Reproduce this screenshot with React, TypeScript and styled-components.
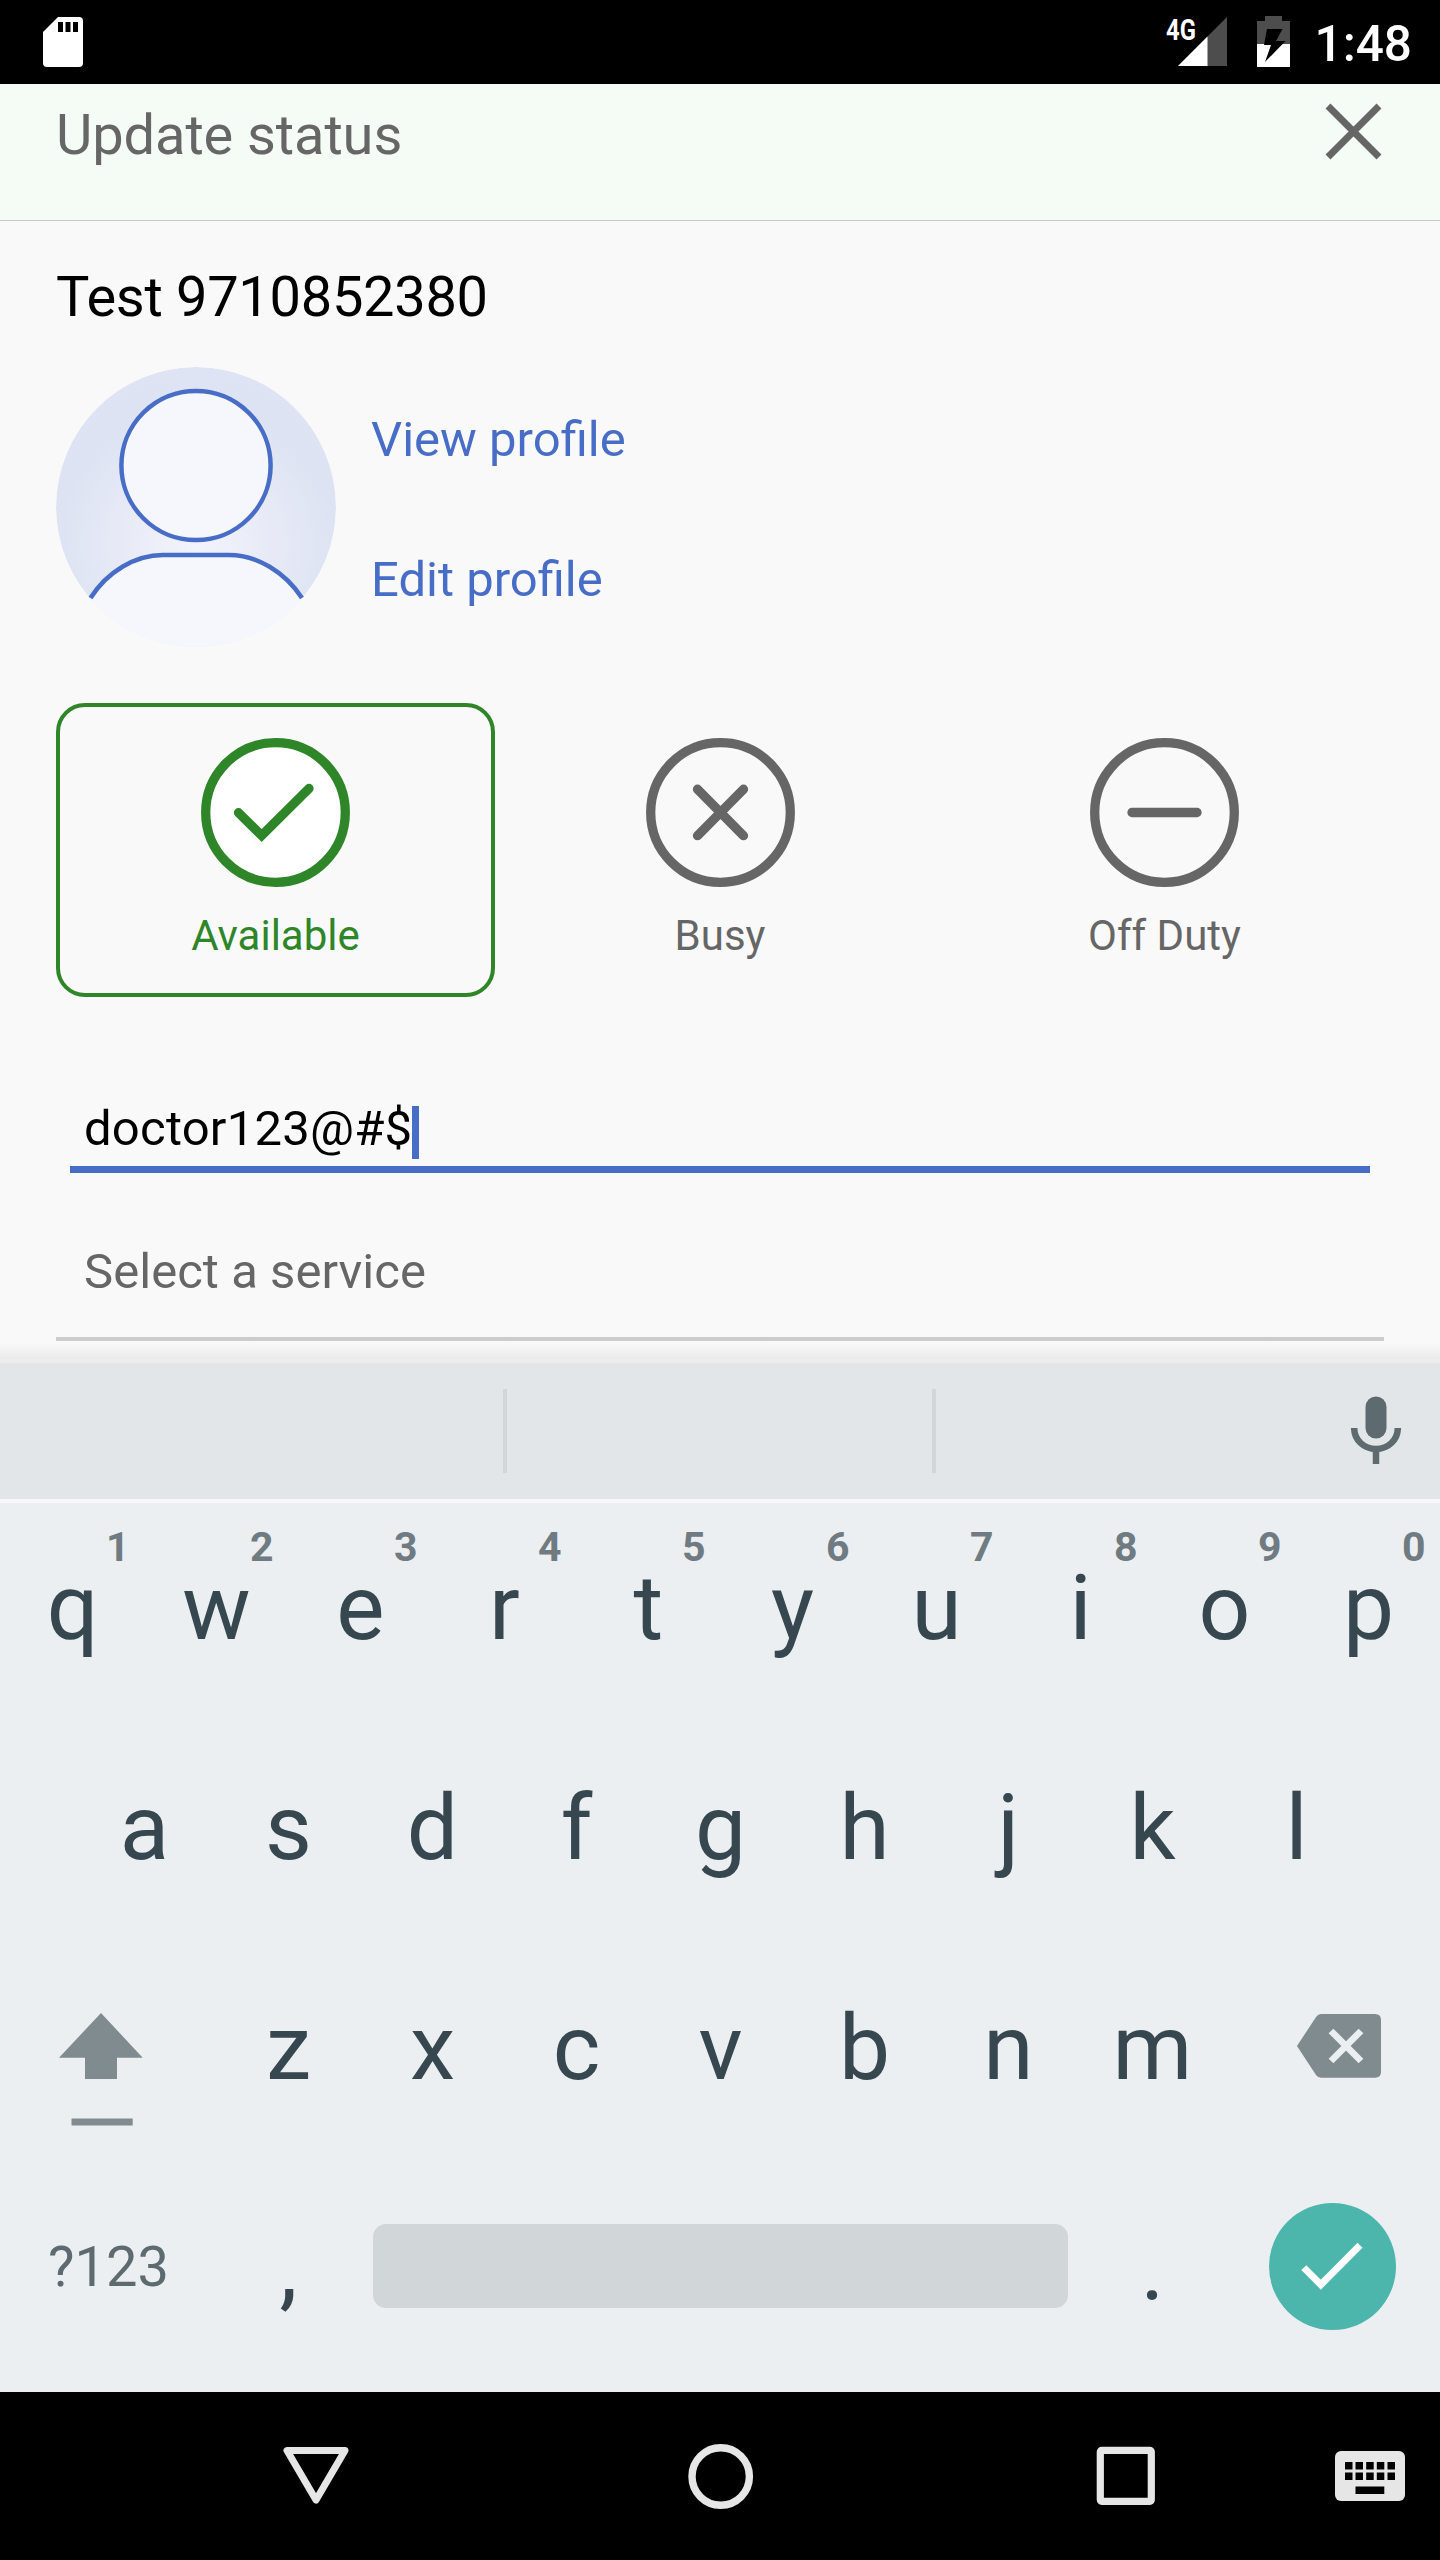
import React from "react";
import styled, { createGlobalStyle } from "styled-components";

const GlobalStyle = createGlobalStyle`
  *, *::before, *::after { box-sizing: border-box; }
  body { margin: 0; background: #f9f9f9; font-family: Roboto, "Noto Sans", sans-serif; }
  svg { display: block; flex: none; }
  button { border: 0; padding: 0; margin: 0; background: none; font: inherit; color: inherit; }
`;

const Screen = styled.div`
  width: 1440px;
  height: 2560px;
  display: flex;
  flex-direction: column;
  overflow: hidden;
  background: #f9f9f9;
`;

const StatusBar = styled.header`
  height: 84px;
  flex: none;
  display: flex;
  justify-content: space-between;
  background: #000;
  color: #fff;
  padding: 0 28px 0 43px;
`;

const StatusGroup = styled.div`
  display: flex;
  align-items: flex-start;
  padding-top: 16px;
`;

const NetworkType = styled.span`
  width: 30px;
  margin-right: -18px;
  padding-top: 2px;
  font-size: 29px;
  line-height: 25px;
  font-weight: 700;
  transform: scaleX(0.82);
  transform-origin: left;
  white-space: nowrap;
`;

const BatteryIcon = styled.svg`
  margin: 0 25px 0 30px;
`;

const Clock = styled.time`
  font-size: 49.5px;
  line-height: 56px;
  font-weight: 500;
`;

const TitleBar = styled.div`
  height: 137px;
  flex: none;
  display: flex;
  justify-content: space-between;
  align-items: flex-start;
  padding: 18px 55px 0 56px;
  background: #f5fcf5;
  border-bottom: 1px solid #c6cac6;
`;

const Title = styled.h1`
  margin: 0;
  font-size: 56px;
  line-height: 66px;
  font-weight: 400;
  letter-spacing: -0.1px;
  color: #666;
`;

const CloseButton = styled.button`
  margin-top: 0;
`;

const Content = styled.main`
  height: 1138px;
  flex: none;
  display: flex;
  flex-direction: column;
  padding: 43px 56px 0;
  background: linear-gradient(#f9f9f9 1122px, #eaeaea 1138px);
`;

const Name = styled.h2`
  margin: 0;
  font-size: 56px;
  line-height: 66px;
  font-weight: 400;
  letter-spacing: -0.3px;
  color: #000;
`;

const Profile = styled.section`
  display: flex;
  margin-top: 37px;
  gap: 35px;
`;

const ProfileLinks = styled.nav`
  display: flex;
  flex-direction: column;
  gap: 82px;
  padding-top: 44px;
`;

const ProfileLink = styled.a`
  font-size: 49px;
  line-height: 58px;
  color: #476dc7;
`;

const StatusGrid = styled.section`
  display: grid;
  grid-template-columns: repeat(3, 1fr);
  column-gap: 5.5px;
  margin-top: 56px;
`;

const StatusOption = styled.button<{ $active?: boolean }>`
  height: 294px;
  display: flex;
  flex-direction: column;
  align-items: center;
  gap: 24px;
  padding-top: 31px;
  border: 4px solid ${(p) => (p.$active ? "#2e8629" : "transparent")};
  border-radius: 29px;
  color: ${(p) => (p.$active ? "#2e8629" : "#666")};
  font-size: 42px;
  line-height: 50px;
`;

const StatusInput = styled.div`
  height: 91px;
  margin: 85px 14px 0;
  padding: 18px 14px 0;
  display: flex;
  align-items: flex-start;
  border-bottom: 7px solid #476dc7;
  font-size: 49px;
  line-height: 58px;
  letter-spacing: 0.22px;
  color: #000;
`;

const Caret = styled.span`
  width: 7px;
  height: 53px;
  margin-top: 6px;
  background: #476dc7;
`;

const ServiceSelect = styled.div`
  height: 168px;
  padding: 70px 28px 0;
  border-bottom: 4px solid #ccc;
  font-size: 49px;
  line-height: 58px;
  letter-spacing: 0.05px;
  color: #666;
`;

const Keyboard = styled.section`
  height: 1033px;
  flex: none;
  display: flex;
  flex-direction: column;
  background: #ebeff2;
  color: #37474f;
`;

const Suggestions = styled.div`
  height: 144px;
  flex: none;
  display: grid;
  grid-template-columns: 507px 429px 1fr;
  align-items: center;
  background: #e2e6e9;
  border-top: 4px solid #ebedee;
  border-bottom: 4px solid #f5f7f9;
`;

const Suggestion = styled.div<{ $last?: boolean }>`
  height: 84px;
  display: flex;
  align-items: center;
  justify-content: flex-end;
  border-right: ${(p) => (p.$last ? "0" : "4px solid #d1d6d8")};
  padding-right: ${(p) => (p.$last ? "39px" : "0")};
  padding-bottom: 2px;
`;

const KeyRow = styled.div`
  height: 220px;
  flex: none;
  display: flex;
  justify-content: center;
`;

const Key = styled.button<{ $width?: number }>`
  position: relative;
  width: ${(p) => p.$width ?? 144}px;
  height: 220px;
  padding: 52px 0 0 1px;
  display: flex;
  justify-content: center;
  align-items: flex-start;
  font-size: 91px;
  line-height: 106px;
`;

const Hint = styled.span`
  position: absolute;
  top: 20px;
  left: 106px;
  font-size: 41px;
  line-height: 48px;
  font-weight: 700;
  color: #6f7b80;
`;

const SymbolsKey = styled(Key)`
  padding-top: 71px;
  font-size: 56px;
  line-height: 66px;
  color: #5d6b70;
`;

const IconKey = styled(Key)<{ $top: number; $align: "start" | "end" }>`
  padding: ${(p) => p.$top}px 59px 0;
  justify-content: flex-${(p) => p.$align};
`;

const SpaceBar = styled.button`
  width: 695px;
  height: 84px;
  margin: 61px 12px 0 13px;
  border-radius: 13px;
  background: #d1d6d9;
`;

const EnterKey = styled.button`
  width: 127px;
  height: 127px;
  margin: 40px 44px 0 45px;
  border-radius: 50%;
  background: #4db6ac;
`;

const NavBar = styled.nav`
  height: 168px;
  flex: none;
  display: grid;
  grid-template-columns: 113px 405px 405px 405px 1fr;
  background: #000;
`;

const NavButton = styled.button<{ $column: number }>`
  grid-column: ${(p) => p.$column};
  display: flex;
  align-items: center;
  justify-content: center;
`;

const SwitcherButton = styled(NavButton)`
  justify-content: flex-start;
  padding-left: 7px;
`;

const SdCard = () => (
  <svg width="40" height="51" viewBox="43 16 40 51">
    <path d="M58 17H79Q83 17 83 21V63Q83 67 79 67H47Q43 67 43 63V32Z" fill="#fff" />
    <path d="M58 22h5v10h-5zM65.500 22h5v10h-5zM73 22h5v10h-5z" fill="#000" />
  </svg>
);

const Signal = () => (
  <svg width="49" height="50" viewBox="1178 16 49 50">
    <path d="M1227 17V66H1178Z" fill="#4d4d4d" />
    <path d="M1207.500 36.500V66H1178Z" fill="#fff" />
  </svg>
);

const Battery = () => (
  <BatteryIcon width="33" height="51" viewBox="1257 16 33 51">
    <path d="M1265 16h17v5h8v23h-33v-23h8z" fill="#4d4d4d" />
    <path d="M1257 44h33v23h-33z" fill="#fff" />
    <path d="M1267 29h15.500l-6.500 12h9.500l-20.500 21 6-17h-7z" fill="#000" />
  </BatteryIcon>
);

const Avatar = () => (
  <svg width="280" height="280" viewBox="56 367 280 280">
    <defs>
      <radialGradient id="halo" gradientUnits="userSpaceOnUse" cx="196" cy="545" r="175">
        <stop offset="0" stopColor="#f2f3fc" />
        <stop offset="0.45" stopColor="#e7eaf6" />
        <stop offset="0.8" stopColor="#dde3f3" />
        <stop offset="1" stopColor="#dfe4f4" />
      </radialGradient>
      <clipPath id="round">
        <circle cx="196" cy="507" r="140" />
      </clipPath>
    </defs>
    <g clipPath="url(#round)">
      <circle cx="196" cy="507" r="140" fill="url(#halo)" />
      <path d="M56 647V620L90.500 598C107 572 135 555 163 555H229C257 555 285 572 302 598L336 620V647Z" fill="#f5f7fd" />
    </g>
    <path d="M90.500 598C107 572 135 555 163 555H229C257 555 285 572 302 598" fill="none" stroke="#476dc7" strokeWidth="4.500" />
    <circle cx="196" cy="465.500" r="74.600" fill="#f5f7fd" stroke="#476dc7" strokeWidth="4.500" />
  </svg>
);

const StatusIcon = ({ d, fill = "none" }: { d: string; fill?: string }) => (
  <svg width="149" height="149" viewBox="0 0 149 149" fill="none" stroke="currentColor" strokeWidth="9.300" strokeLinecap="round">
    <circle cx="74.500" cy="74.500" r="69.800" fill={fill} />
    <path d={d} />
  </svg>
);

const Mic = () => (
  <svg width="50" height="68" viewBox="0 0 50 68">
    <rect x="14.500" y="0.500" width="21" height="42" rx="10.500" fill="#5d6a70" />
    <path d="M3.200 32C3.200 44 13 53 25 53S46.800 44 46.800 32M25 53V68" fill="none" stroke="#5d6a70" strokeWidth="6.500" />
  </svg>
);

const Shift = () => (
  <svg width="84" height="114" viewBox="59 2012 84 114" fill="#808b8f">
    <path d="M101 2013L142.700 2057.700H117V2079H85V2057.700H59Z" />
    <path d="M71.500 2118.500h61.200v7h-61.200z" />
  </svg>
);

const Backspace = () => (
  <svg width="84" height="64" viewBox="1297 2014 84 64">
    <path d="M1297 2046L1316 2017Q1318 2014 1321 2014H1375Q1381 2014 1381 2020V2072Q1381 2077.700 1375 2077.700H1321Q1318 2077.700 1316 2075Z" fill="#808b8f" />
    <path d="M1331 2031L1361 2061M1361 2031L1331 2061" stroke="#ebeff2" strokeWidth="6.700" />
  </svg>
);

const Keys = ({ letters, hints }: { letters: string; hints?: string }) => (
  <>
    {letters.split("").map((letter, i) => (
      <Key key={letter}>
        {letter}
        {hints && <Hint>{hints[i]}</Hint>}
      </Key>
    ))}
  </>
);

export default function App() {
  return (
    <>
      <GlobalStyle />
      <Screen>
        <StatusBar>
          <StatusGroup>
            <SdCard />
          </StatusGroup>
          <StatusGroup>
            <NetworkType>4G</NetworkType>
            <Signal />
            <Battery />
            <Clock>1:48</Clock>
          </StatusGroup>
        </StatusBar>

        <TitleBar>
          <Title>Update status</Title>
          <CloseButton aria-label="Close">
            <svg width="61" height="61" viewBox="0 0 61 61">
              <path d="M4 4L55 55M55 4L4 55" stroke="#666" strokeWidth="6.900" />
            </svg>
          </CloseButton>
        </TitleBar>

        <Content>
          <Name>Test 9710852380</Name>
          <Profile>
            <Avatar />
            <ProfileLinks>
              <ProfileLink>View profile</ProfileLink>
              <ProfileLink>Edit profile</ProfileLink>
            </ProfileLinks>
          </Profile>
          <StatusGrid>
            <StatusOption $active>
              <StatusIcon d="M37.500 74.700L60.700 97.500L108 50.500" fill="#fff" />
              Available
            </StatusOption>
            <StatusOption>
              <StatusIcon d="M51.500 51.200L97.500 97.700M97.500 51.200L51.500 97.700" />
              Busy
            </StatusOption>
            <StatusOption>
              <StatusIcon d="M42 74.500H107" />
              Off Duty
            </StatusOption>
          </StatusGrid>
          <StatusInput>
            doctor123@#$
            <Caret />
          </StatusInput>
          <ServiceSelect>Select a service</ServiceSelect>
        </Content>

        <Keyboard>
          <Suggestions>
            <Suggestion />
            <Suggestion />
            <Suggestion $last>
              <Mic />
            </Suggestion>
          </Suggestions>
          <KeyRow>
            <Keys letters="qwertyuiop" hints="1234567890" />
          </KeyRow>
          <KeyRow>
            <Keys letters="asdfghjkl" />
          </KeyRow>
          <KeyRow>
            <IconKey $width={216} $top={69} $align="start" aria-label="Shift">
              <Shift />
            </IconKey>
            <Keys letters="zxcvbnm" />
            <IconKey $width={216} $top={71} $align="end" aria-label="Backspace">
              <Backspace />
            </IconKey>
          </KeyRow>
          <KeyRow>
            <SymbolsKey $width={216}>?123</SymbolsKey>
            <Key>,</Key>
            <SpaceBar aria-label="Space" />
            <Key>.</Key>
            <EnterKey aria-label="Done">
              <svg width="127" height="127" viewBox="1269.200 2202.800 127 127">
                <path d="M1304 2267.400L1321 2284.500L1360.200 2245" fill="none" stroke="#fff" strokeWidth="7" />
              </svg>
            </EnterKey>
          </KeyRow>
        </Keyboard>

        <NavBar>
          <NavButton $column={2} aria-label="Back">
            <svg width="66" height="66" viewBox="283 2444 66 66">
              <path d="M287 2451.500H345L316 2501Z" fill="none" stroke="#e6e6e6" strokeWidth="7" strokeLinejoin="round" />
            </svg>
          </NavButton>
          <NavButton $column={3} aria-label="Home">
            <svg width="66" height="66" viewBox="0 0 66 66">
              <circle cx="32.700" cy="33.500" r="28.700" fill="none" stroke="#e6e6e6" strokeWidth="7.400" />
            </svg>
          </NavButton>
          <NavButton $column={4} aria-label="Recents">
            <svg width="60" height="60" viewBox="0 0 60 60">
              <rect x="4.300" y="4.300" width="51" height="51" rx="1.500" fill="none" stroke="#e6e6e6" strokeWidth="7.200" />
            </svg>
          </NavButton>
          <SwitcherButton $column={5} aria-label="Switch keyboard">
            <svg width="70" height="50" viewBox="1335 2451 70 50">
              <rect x="1335" y="2451" width="70" height="50" rx="6" fill="#e6e6e6" />
              <path
                d="M1345 2462h7.500v7.500h-7.500zM1355.500 2462h7.500v7.500h-7.500zM1366.200 2462h7.500v7.500h-7.500zM1376.800 2462h7.500v7.500h-7.500zM1387.500 2462h7.500v7.500h-7.500zM1345 2472.500h7.500v7.500h-7.500zM1355.500 2472.500h7.500v7.500h-7.500zM1366.200 2472.500h7.500v7.500h-7.500zM1376.800 2472.500h7.500v7.500h-7.500zM1387.500 2472.500h7.500v7.500h-7.500zM1355.500 2486.500h28.800v7.500h-28.800z"
                fill="#000"
              />
            </svg>
          </SwitcherButton>
        </NavBar>
      </Screen>
    </>
  );
}
